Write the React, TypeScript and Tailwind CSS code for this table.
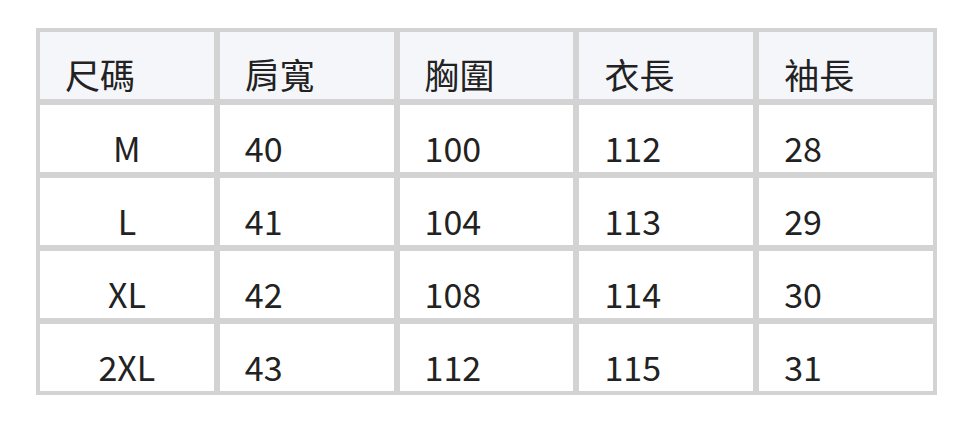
const headers = ["尺碼", "肩寬", "胸圍", "衣長", "袖長"];

const rows = [
  ["M", "40", "100", "112", "28"],
  ["L", "41", "104", "113", "29"],
  ["XL", "42", "108", "114", "30"],
  ["2XL", "43", "112", "115", "31"],
];

export default function App() {
  return (
    <div
      className="min-h-[422px] bg-white pt-[28px] pl-[36px] text-[#222]"
      style={{ fontFamily: '"Noto Sans CJK TC", "Noto Sans", sans-serif' }}
    >
      <div className="grid w-[901px] grid-cols-5 gap-[6px] bg-[#d3d3d3] p-[4px] text-[34px] leading-[48px]">
        {headers.map((h) => (
          <div
            key={h}
            className="flex h-[67px] items-end bg-[#f5f6fa] pb-[1px] pl-[25px] text-[35px]"
          >
            {h}
          </div>
        ))}
        {rows.map((row) =>
          row.map((cell, i) => (
            <div
              key={row[0] + i}
              className={
                i === 0
                  ? "flex h-[67px] items-end justify-center bg-white"
                  : "flex h-[67px] items-end bg-white pl-[25px]"
              }
            >
              {cell}
            </div>
          ))
        )}
      </div>
    </div>
  );
}
